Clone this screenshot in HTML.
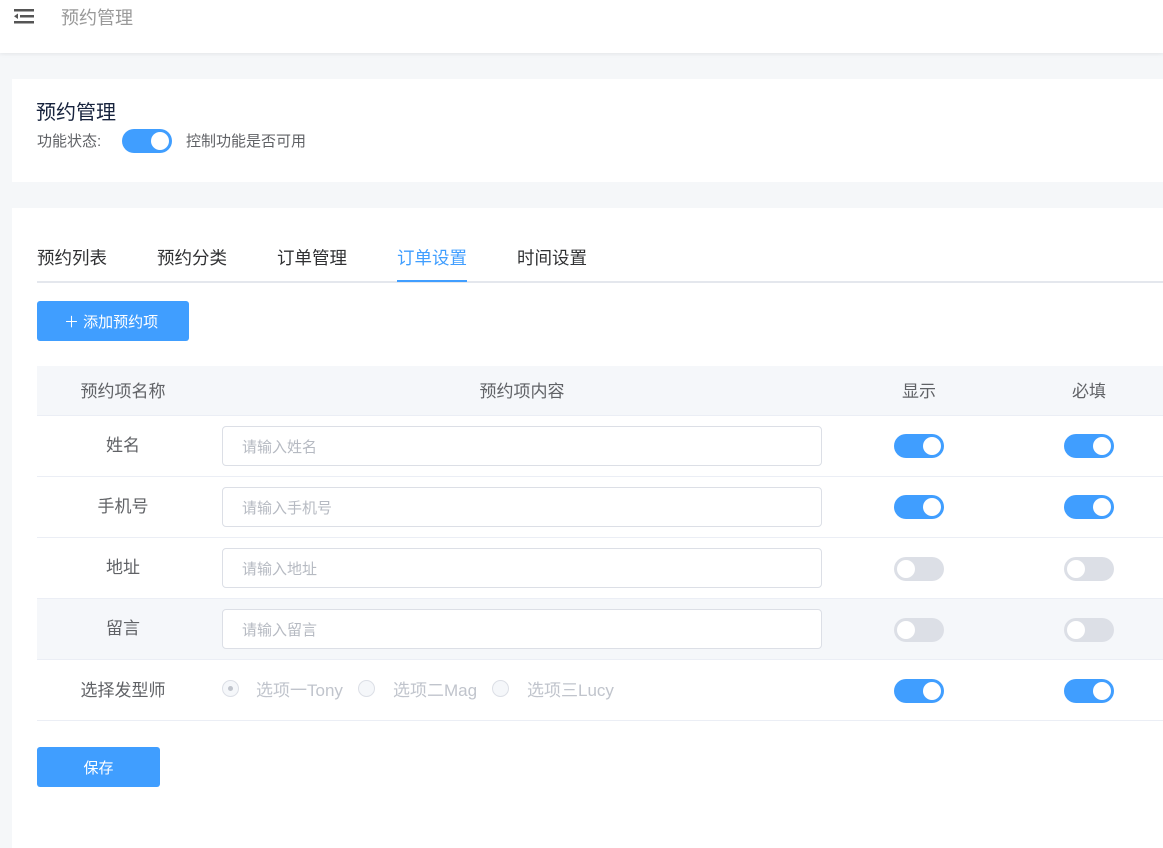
<!DOCTYPE html>
<html><head><meta charset="utf-8"><style>
*{box-sizing:border-box;margin:0;padding:0}
body{width:1163px;height:844px;overflow:hidden;background:#f5f7f9;font-family:"Liberation Sans","Noto Sans CJK SC",sans-serif;position:relative;color:#606266}
.hdr{position:absolute;left:0;top:0;width:1163px;height:53px;background:#fff;box-shadow:0 1px 4px rgba(0,21,41,.08)}
.card{position:absolute;background:#fff;left:12px;width:1160px}
.sw{position:absolute;width:50px;height:24px;border-radius:12px;background:#409eff}
.sw::after{content:"";position:absolute;top:3px;left:29px;width:18px;height:18px;border-radius:50%;background:#fff}
.sw.off{background:#dcdfe6}.sw.off::after{left:3px}
.t{position:absolute;white-space:nowrap}
.row{position:absolute;left:25px;width:1140px;height:61px;border-bottom:1px solid #ebeef5}
.inp{position:absolute;left:185px;top:10px;width:600px;height:40px;border:1px solid #dcdfe6;border-radius:4px;font-size:15px;color:#b6bac2;padding:9px 0 0 19px;background:#fff}
.nm{position:absolute;left:0;width:172px;text-align:center;top:15px;font-size:17px;color:#606266}
</style></head><body>
<div class="hdr">
<svg style="position:absolute;left:14px;top:8px" width="20" height="16" viewBox="0 0 20 16"><rect x="0" y="1" width="20" height="2.5" fill="#555"/><rect x="6" y="7" width="14" height="2.5" fill="#555"/><rect x="0" y="13" width="20" height="2.5" fill="#555"/><path d="M0 8.2 L4 5.5 L4 11Z" fill="#555"/></svg>
<div class="t" style="left:61px;top:4px;font-size:18px;color:#999">预约管理</div>
</div>
<div class="card" style="top:79px;height:103px">
<div class="t" style="left:24px;top:17px;font-size:20px;color:#17233d">预约管理</div>
<div class="t" style="left:25px;top:51px;font-size:15px">功能状态:</div>
<div class="sw" style="left:110px;top:50px"></div>
<div class="t" style="left:174px;top:51px;font-size:15px">控制功能是否可用</div>
</div>
<div class="card" style="top:208px;height:640px">
<div class="t" style="left:25px;top:37px;font-size:17.5px;color:#303133">预约列表</div>
<div class="t" style="left:145px;top:37px;font-size:17.5px;color:#303133">预约分类</div>
<div class="t" style="left:265px;top:37px;font-size:17.5px;color:#303133">订单管理</div>
<div class="t" style="left:385px;top:37px;font-size:17.5px;color:#409eff">订单设置</div>
<div class="t" style="left:505px;top:37px;font-size:17.5px;color:#303133">时间设置</div>
<div style="position:absolute;left:25px;top:73px;width:1140px;height:2px;background:#e4e7ed"></div>
<div style="position:absolute;left:385px;top:72px;width:70px;height:2px;background:#409eff"></div>
<div style="position:absolute;left:25px;top:93px;width:152px;height:40px;background:#409eff;border-radius:3px;color:#fff;font-size:15px;padding:10px 0 0 27px">＋ 添加预约项</div>
<div style="position:absolute;left:25px;top:158px;width:1140px;height:50px;background:#f5f7fa;border-bottom:1px solid #ebeef5;font-size:17px">
<div class="t" style="left:0;width:172px;text-align:center;top:11px">预约项名称</div>
<div class="t" style="left:185px;width:600px;text-align:center;top:11px">预约项内容</div>
<div class="t" style="left:857px;width:50px;text-align:center;top:11px">显示</div>
<div class="t" style="left:1027px;width:50px;text-align:center;top:11px">必填</div>
</div>
<div class="row" style="top:208px"><div class="nm">姓名</div><div class="inp">请输入姓名</div><div class="sw" style="left:857px;top:18px"></div><div class="sw" style="left:1027px;top:18px"></div></div>
<div class="row" style="top:269px"><div class="nm">手机号</div><div class="inp">请输入手机号</div><div class="sw" style="left:857px;top:18px"></div><div class="sw" style="left:1027px;top:18px"></div></div>
<div class="row" style="top:330px"><div class="nm">地址</div><div class="inp">请输入地址</div><div class="sw off" style="left:857px;top:19px"></div><div class="sw off" style="left:1027px;top:19px"></div></div>
<div class="row" style="top:391px;background:#f5f7fa"><div class="nm">留言</div><div class="inp">请输入留言</div><div class="sw off" style="left:857px;top:19px"></div><div class="sw off" style="left:1027px;top:19px"></div></div>
<div class="row" style="top:452px"><div class="nm" style="top:16px">选择发型师</div>
<div style="position:absolute;left:185px;top:20px;width:17px;height:17px;border-radius:50%;border:1px solid #dcdfe6;background:#f5f7fa"><div style="position:absolute;left:5px;top:5px;width:5px;height:5px;border-radius:50%;background:#c0c4cc"></div></div>
<div class="t" style="left:219px;top:16px;font-size:17px;color:#c0c4cc">选项一Tony</div>
<div style="position:absolute;left:321px;top:20px;width:17px;height:17px;border-radius:50%;border:1px solid #dcdfe6;background:#f5f7fa"></div>
<div class="t" style="left:356px;top:16px;font-size:17px;color:#c0c4cc">选项二Mag</div>
<div style="position:absolute;left:455px;top:20px;width:17px;height:17px;border-radius:50%;border:1px solid #dcdfe6;background:#f5f7fa"></div>
<div class="t" style="left:490px;top:16px;font-size:17px;color:#c0c4cc">选项三Lucy</div>
<div class="sw" style="left:857px;top:19px"></div><div class="sw" style="left:1027px;top:19px"></div></div>
<div style="position:absolute;left:25px;top:539px;width:123px;height:40px;background:#409eff;border-radius:3px;color:#fff;font-size:15px;text-align:center;padding-top:10px">保存</div>
</div>
</body></html>
